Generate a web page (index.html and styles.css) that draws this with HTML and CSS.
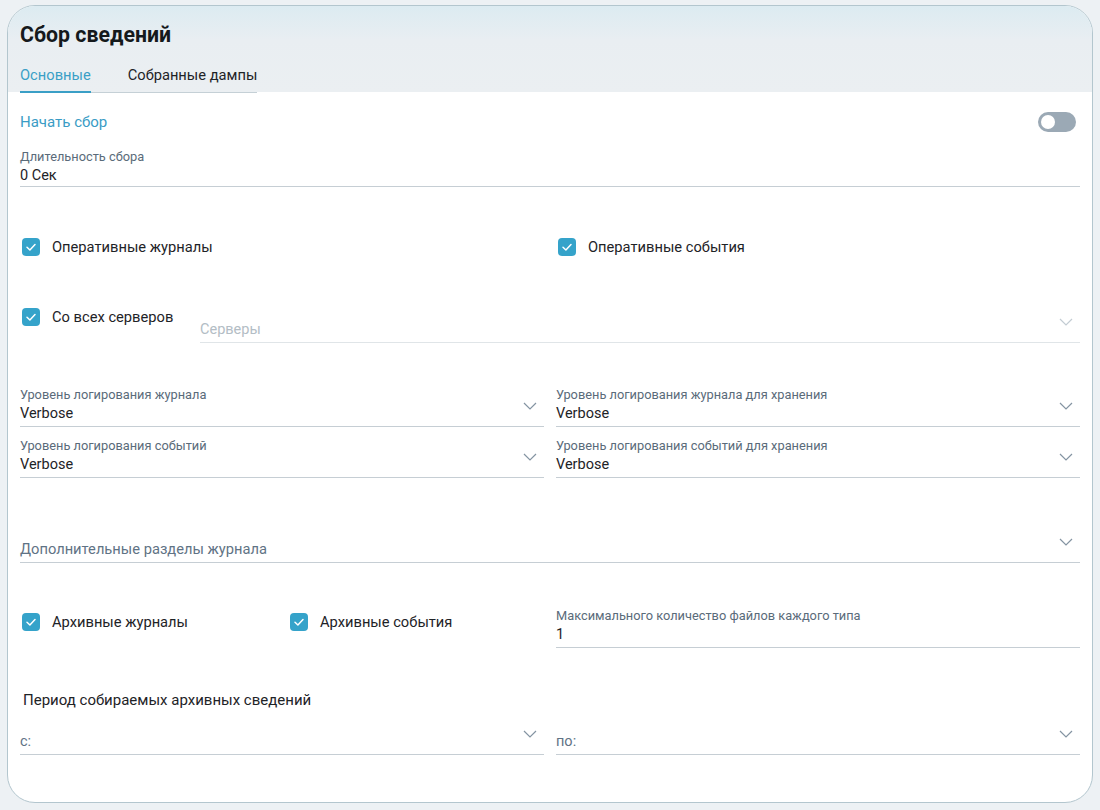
FILE: index.html
```html
<!doctype html>
<html>
<head>
<meta charset="UTF-8">
<link rel="stylesheet" href="styles.css">
</head>
<body>
<div class="card">
  <div class="head">
    <h1 class="title">Сбор сведений</h1>
    <div class="tabs">
      <span class="tab active">Основные</span>
      <span class="tab">Собранные дампы</span>
    </div>
  </div>

  <div class="content">
    <div class="start-row">
      <span class="start-link">Начать сбор</span>
      <span class="toggle"><span class="knob"></span></span>
    </div>

    <div class="field duration">
      <div class="f-label">Длительность сбора</div>
      <div class="f-value">0 Сек</div>
    </div>

    <div class="grid2 ops">
      <label class="check"><span class="box"><svg viewBox="0 0 18 18"><polyline points="5,9.3 7.9,12 13,6.6"/></svg></span>Оперативные журналы</label>
      <label class="check"><span class="box"><svg viewBox="0 0 18 18"><polyline points="5,9.3 7.9,12 13,6.6"/></svg></span>Оперативные события</label>
    </div>

    <div class="servers-row">
      <label class="check"><span class="box"><svg viewBox="0 0 18 18"><polyline points="5,9.3 7.9,12 13,6.6"/></svg></span>Со всех серверов</label>
      <div class="field select disabled">
        <div class="f-label"></div>
        <div class="f-value placeholder">Серверы</div>
        <svg class="chev" viewBox="0 0 14 8"><polyline points="1,1 7,7 13,1"/></svg>
      </div>
    </div>

    <div class="grid2 levels">
      <div class="field select">
        <div class="f-label">Уровень логирования журнала</div>
        <div class="f-value">Verbose</div>
        <svg class="chev" viewBox="0 0 14 8"><polyline points="1,1 7,7 13,1"/></svg>
      </div>
      <div class="field select">
        <div class="f-label">Уровень логирования журнала для хранения</div>
        <div class="f-value">Verbose</div>
        <svg class="chev" viewBox="0 0 14 8"><polyline points="1,1 7,7 13,1"/></svg>
      </div>
      <div class="field select">
        <div class="f-label">Уровень логирования событий</div>
        <div class="f-value">Verbose</div>
        <svg class="chev" viewBox="0 0 14 8"><polyline points="1,1 7,7 13,1"/></svg>
      </div>
      <div class="field select">
        <div class="f-label">Уровень логирования событий для хранения</div>
        <div class="f-value">Verbose</div>
        <svg class="chev" viewBox="0 0 14 8"><polyline points="1,1 7,7 13,1"/></svg>
      </div>
    </div>

    <div class="field select extra">
      <div class="f-label"></div>
      <div class="f-value hint">Дополнительные разделы журнала</div>
      <svg class="chev" viewBox="0 0 14 8"><polyline points="1,1 7,7 13,1"/></svg>
    </div>

    <div class="grid2 archive">
      <div class="grid2 archive-checks">
        <label class="check"><span class="box"><svg viewBox="0 0 18 18"><polyline points="5,9.3 7.9,12 13,6.6"/></svg></span>Архивные журналы</label>
        <label class="check"><span class="box"><svg viewBox="0 0 18 18"><polyline points="5,9.3 7.9,12 13,6.6"/></svg></span>Архивные события</label>
      </div>
      <div class="field">
        <div class="f-label">Максимального количество файлов каждого типа</div>
        <div class="f-value">1</div>
      </div>
    </div>

    <div class="period-title">Период собираемых архивных сведений</div>

    <div class="grid2 period">
      <div class="field select">
        <div class="f-label"></div>
        <div class="f-value hint">с:</div>
        <svg class="chev" viewBox="0 0 14 8"><polyline points="1,1 7,7 13,1"/></svg>
      </div>
      <div class="field select">
        <div class="f-label"></div>
        <div class="f-value hint">по:</div>
        <svg class="chev" viewBox="0 0 14 8"><polyline points="1,1 7,7 13,1"/></svg>
      </div>
    </div>
  </div>
</div>
</body>
</html>
```

FILE: styles.css
```css
body { margin: 0; background: #edf1f4; font-family: Roboto, "Noto Sans", sans-serif; color: #1e2327; }

.card { margin: 5px 7px 6px 7px; height: 796px; border: 1px solid #b3c6ce; border-radius: 28px; background: #fff; overflow: hidden; display: flex; flex-direction: column; }

.head { background: linear-gradient(#dcebf1, #e9eef2 40%, #ebeff2); padding: 17px 12px 0 12px; height: 69px; }
.title { margin: 0; font-size: 21.3px; line-height: 24px; font-weight: 700; color: #15191c; }
.tabs { display: inline-flex; gap: 37px; margin-top: 18px; border-bottom: 1px solid #c5d0d6; }
.tab { font-size: 14.7px; line-height: 20px; padding-bottom: 6px; margin-bottom: -1px; border-bottom: 2px solid transparent; color: #1e2327; }
.tab.active { color: #3a9fc6; border-bottom-color: #3a9fc6; }

.content { padding: 20px 12px 0 12px; }

.start-row { display: flex; justify-content: space-between; align-items: center; height: 20px; }
.start-link { font-size: 15px; color: #3a9cc5; }
.toggle { width: 38px; height: 20px; border-radius: 10px; background: #9ba9b5; margin-right: 4px; position: relative; }
.knob { position: absolute; left: 3px; top: 3px; width: 14px; height: 14px; border-radius: 50%; background: #fff; }

.field { position: relative; border-bottom: 1px solid #c6ced4; padding-bottom: 2px; }
.f-label { font-size: 12.8px; line-height: 17px; height: 17px; color: #5a6b7a; }
.f-value { font-size: 14.5px; line-height: 21px; height: 21px; color: #1e2327; }
.f-value.placeholder { color: #b3bdc5; }
.f-value.hint { color: #5f7385; }
.chev { position: absolute; right: 7px; top: 16px; width: 14px; height: 8px; fill: none; stroke: #8494a2; stroke-width: 1.2; }

.duration { margin-top: 16px; padding-bottom: 0; }

.grid2 { display: grid; grid-template-columns: 1fr 1fr; column-gap: 12px; }

.check { display: flex; align-items: center; height: 24px; padding-left: 2px; font-size: 14.7px; color: #1e2327; }
.box { width: 18px; height: 18px; border-radius: 4px; background: #35a3ca; margin-right: 12px; flex: none; }
.box svg { display: block; width: 18px; height: 18px; fill: none; stroke: #fff; stroke-width: 1.5; stroke-linecap: round; stroke-linejoin: round; }

.ops { margin-top: 48px; }

.servers-row { display: flex; align-items: flex-start; margin-top: 43px; }
.servers-row .check { width: 178px; flex: none; margin-top: 3px; }
.servers-row .field { flex: 1; }
.field.disabled { border-bottom-color: #e0e5e8; }
.field.disabled .chev { stroke: #c3ccd3; }

.levels { margin-top: 43px; row-gap: 10px; }

.extra { margin-top: 44px; }
.extra .f-value { font-size: 14.7px; }

.archive { margin-top: 44px; }
.archive-checks .check { margin-top: 3px; }

.period-title { margin-top: 42px; padding-left: 3px; font-size: 15px; line-height: 20px; color: #1e2327; }
.period { margin-top: 4px; }
```
